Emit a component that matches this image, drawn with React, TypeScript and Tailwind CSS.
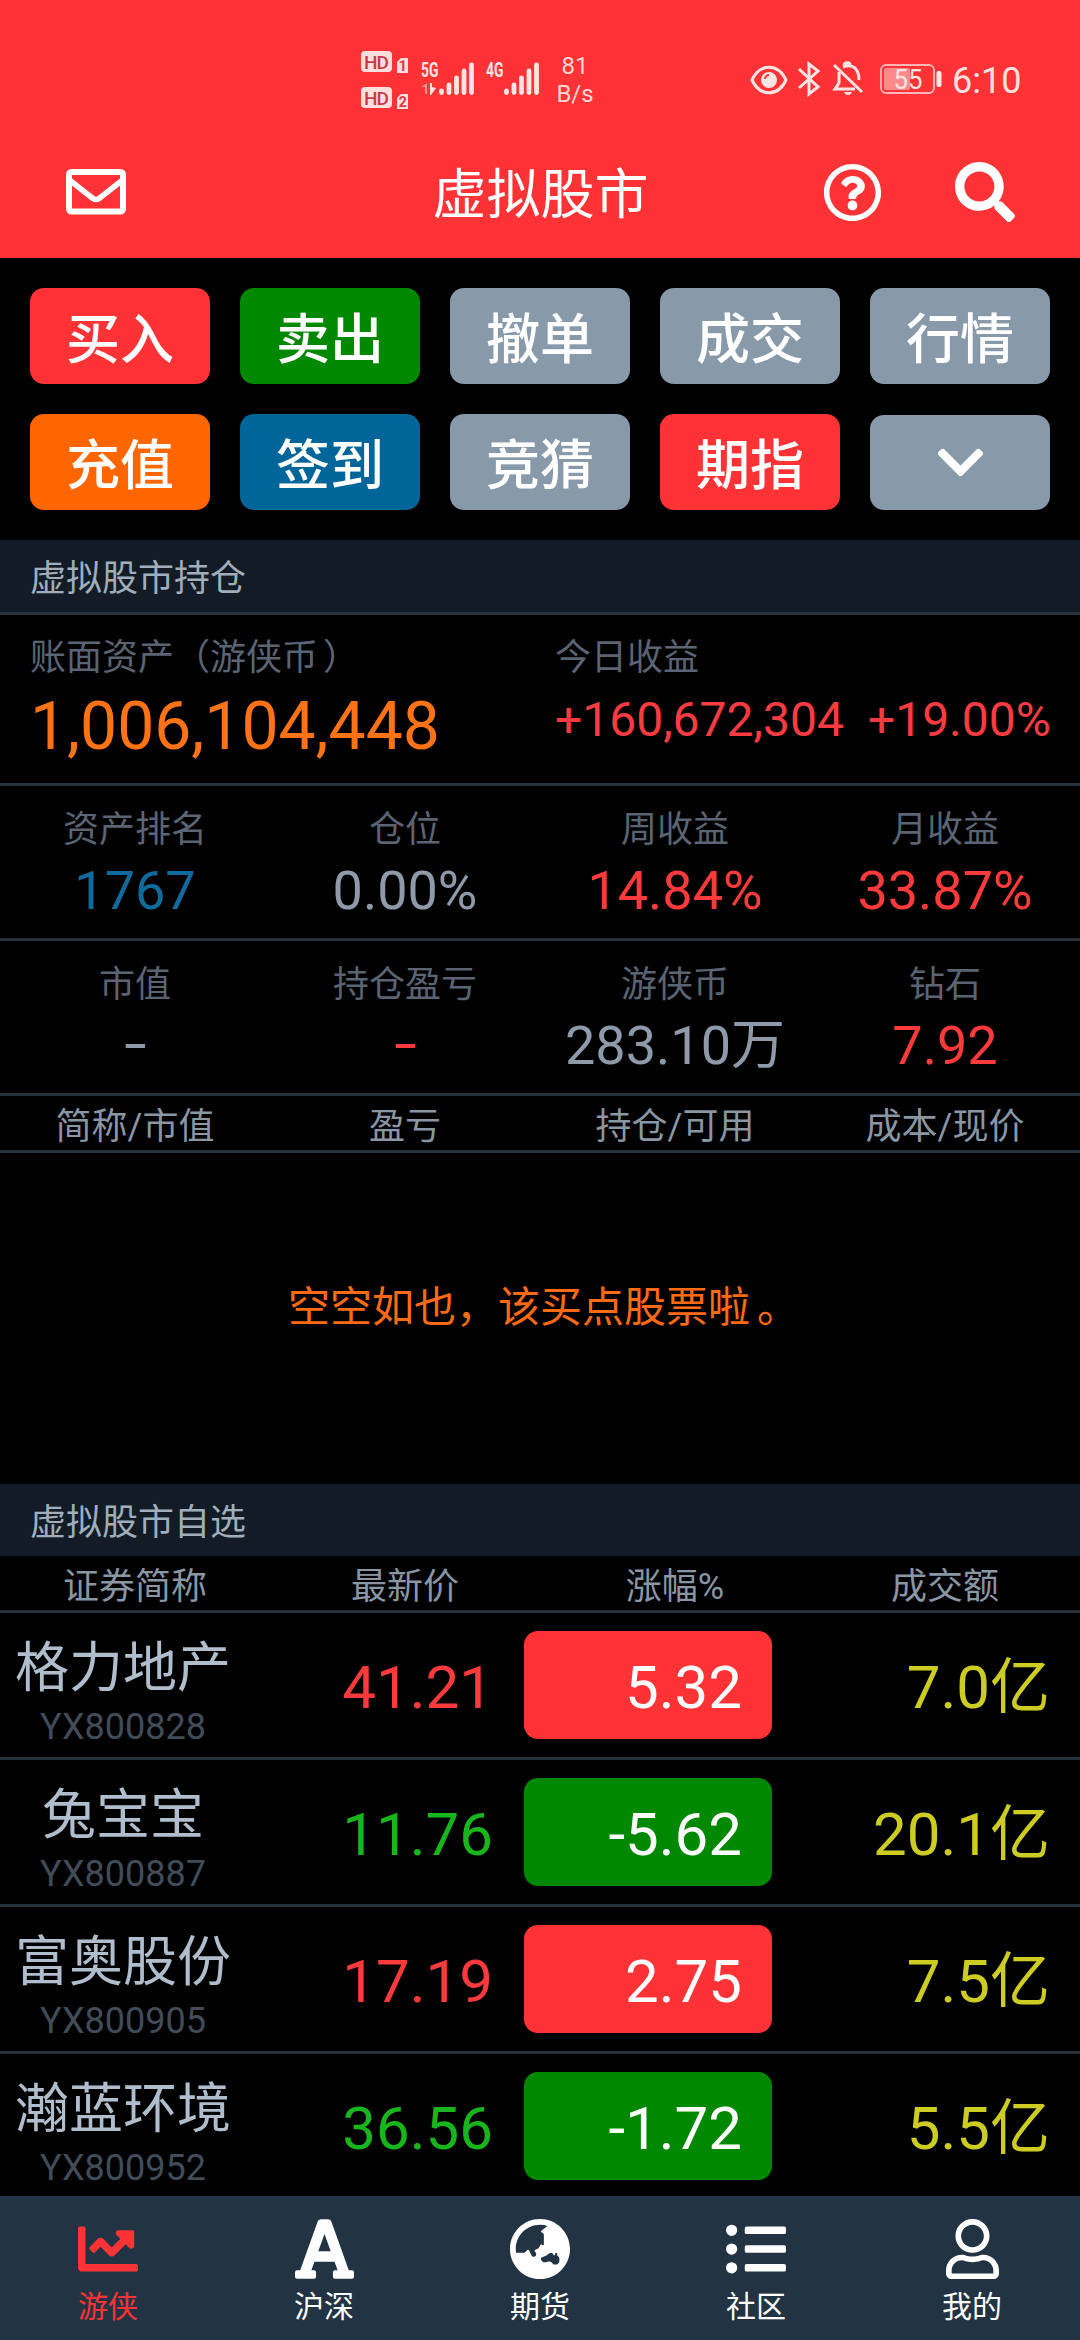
import React from 'react';
import {
  FaChartLine,
  FaChevronDown,
  FaFont,
  FaGlobeAsia,
  FaListUl,
  FaRegQuestionCircle,
  FaRegUser,
  FaSearch,
} from 'react-icons/fa';
import type { IconType } from 'react-icons';

interface Action {
  label: string;
  color: string;
}

interface Stat {
  label: string;
  value: string;
  color: string;
}

interface Stock {
  name: string;
  code: string;
  price: string;
  change: string;
  amount: string;
}

interface Tab {
  label: string;
  icon: IconType;
  size: string;
}

const actions: Action[] = [
  { label: '买入', color: 'bg-[#ff3336]' },
  { label: '卖出', color: 'bg-[#008800]' },
  { label: '撤单', color: 'bg-[#8899aa]' },
  { label: '成交', color: 'bg-[#8899aa]' },
  { label: '行情', color: 'bg-[#8899aa]' },
  { label: '充值', color: 'bg-[#ff6600]' },
  { label: '签到', color: 'bg-[#006699]' },
  { label: '竞猜', color: 'bg-[#8899aa]' },
  { label: '期指', color: 'bg-[#ff3336]' },
];

const incomeStats: Stat[] = [
  { label: '资产排名', value: '1767', color: 'text-[#106a9c]' },
  { label: '仓位', value: '0.00%', color: 'text-[#8e9aaa]' },
  { label: '周收益', value: '14.84%', color: 'text-[#ff3a3c]' },
  { label: '月收益', value: '33.87%', color: 'text-[#ff3a3c]' },
];

const balanceStats: Stat[] = [
  { label: '市值', value: '-', color: 'text-[#8e9aaa]' },
  { label: '持仓盈亏', value: '-', color: 'text-[#ff3a3c]' },
  { label: '游侠币', value: '283.10万', color: 'text-[#8e9aaa]' },
  { label: '钻石', value: '7.92', color: 'text-[#ff3a3c]' },
];

const stocks: Stock[] = [
  { name: '格力地产', code: 'YX800828', price: '41.21', change: '5.32', amount: '7.0亿' },
  { name: '兔宝宝', code: 'YX800887', price: '11.76', change: '-5.62', amount: '20.1亿' },
  { name: '富奥股份', code: 'YX800905', price: '17.19', change: '2.75', amount: '7.5亿' },
  { name: '瀚蓝环境', code: 'YX800952', price: '36.56', change: '-1.72', amount: '5.5亿' },
];

const tabs: Tab[] = [
  { label: '游侠', icon: FaChartLine, size: 'size-[60px]' },
  { label: '沪深', icon: FaFont, size: 'h-[68px] w-[59px]' },
  { label: '期货', icon: FaGlobeAsia, size: 'h-[62px] w-[60px]' },
  { label: '社区', icon: FaListUl, size: 'size-[60px]' },
  { label: '我的', icon: FaRegUser, size: 'h-[60px] w-[53px]' },
];

const HdBadge: React.FC<{ sim: string }> = ({ sim }) => (
  <svg width="48" height="24" viewBox="0 0 48 24">
    <rect x="0" y="1" width="31" height="21" rx="4" fill="#ffdede" />
    <text x="15.5" y="18.5" textAnchor="middle" textLength="25" fontSize="19" fontWeight="500" fill="#c83a44">
      HD
    </text>
    <path d="M36 12l4-4h7v15H36z" fill="#ffdede" />
    <text x="41.8" y="21" textAnchor="middle" fontSize="14" fontWeight="700" fill="#d83a40">
      {sim}
    </text>
  </svg>
);

const Signal: React.FC<{ label: string; traffic?: boolean }> = ({ label, traffic }) => (
  <svg width="56" height="40" viewBox="0 -4 56 40">
    <text x="1" y="15.5" textLength="17.5" lengthAdjust="spacingAndGlyphs" fontSize="21" fontWeight="700" fill="#ffe4e4">
      {label}
    </text>
    {traffic && (
      <g>
        <path d="M1 26l6-4v11H5v-7z" fill="#ff8d8d" />
        <path d="M10 22h2v4l4 1-5 7h-1z" fill="#ffe4e4" />
      </g>
    )}
    <path
      d="M21.5 30v1.5M29 24v7.5M36.5 17v14.5M44 10v21.5M51.5 4v27.5"
      stroke="#ffe4e4"
      strokeWidth="4.8"
      strokeLinecap="round"
    />
  </svg>
);

const StatusBar: React.FC = () => (
  <div className="flex h-[140px] pt-[50px] pl-[361px] text-[#ffe0e0]">
    <div className="flex flex-col gap-3">
      <HdBadge sim="1" />
      <HdBadge sim="2" />
    </div>
    <div className="mt-[7px] ml-[11px] flex gap-[9px]">
      <Signal label="5G" traffic />
      <Signal label="4G" />
    </div>
    <div className="ml-[12px] w-[44px] text-center text-[24px] leading-[28px] text-[#ffd6d6]">
      <div className="mt-[2px]">81</div>
      <div>B/s</div>
    </div>
    <svg className="mt-[15px] ml-[153px]" width="38" height="30" viewBox="0 0 38 30" fill="none">
      <path d="M2 15C10-2 28-2 36 15 28 32 10 32 2 15z" stroke="#ffe4e4" strokeWidth="3" />
      <circle cx="19" cy="15" r="8" fill="#ffe4e4" />
      <path d="M15 14a4 4 0 0 1 4-4" stroke="#ff3336" strokeWidth="2" />
    </svg>
    <svg className="mt-[11px] ml-[9px]" width="24" height="36" viewBox="0 0 24 36" fill="none">
      <path d="M2 8l19 18-9 7V3l9 7L2 27" stroke="#ffe4e4" strokeWidth="3" />
    </svg>
    <svg className="mt-[11px] ml-[11px]" width="32" height="36" viewBox="0 0 32 36" fill="none">
      <path d="M7 11v11l-4 6h20M11 6c10-4 16 2 16 13M12 4c1-3 6-3 6 0" stroke="#ffe4e4" strokeWidth="3" />
      <path d="M2 4l28 27" stroke="#ffe4e4" strokeWidth="3" />
      <path d="M12 31h8c-1 4-7 4-8 0z" fill="#ffe4e4" />
    </svg>
    <svg className="mt-[13px] ml-[16px]" width="63" height="32" viewBox="0 0 63 32">
      <rect x="1" y="2" width="53" height="28" rx="5" fill="none" stroke="#ffb6b6" strokeWidth="1.8" />
      <rect x="4" y="5" width="26" height="22" rx="2" fill="#ff8a8c" />
      <text
        x="28"
        y="25.5"
        textAnchor="middle"
        textLength="29"
        lengthAdjust="spacingAndGlyphs"
        fontSize="27"
        fill="#ffe4e4"
      >
        55
      </text>
      <rect x="56.5" y="8" width="5" height="16" rx="2" fill="#ffe4e4" />
    </svg>
    <div className="mt-[8px] ml-[9px] text-[36px] leading-[46px]">6:10</div>
  </div>
);

const MailIcon: React.FC = () => (
  <svg width="60" height="46" viewBox="0 0 60 46" fill="none" stroke="currentColor" strokeLinejoin="round">
    <rect x="3" y="3" width="54" height="39.5" rx="2.5" strokeWidth="6" />
    <path d="M4 11.5L27 29.5Q30 31.5 33 29.5L56 11.5" strokeWidth="5.5" />
  </svg>
);

const Header: React.FC = () => (
  <header className="h-[258px] bg-[#ff3336] text-white">
    <StatusBar />
    <div className="grid h-[104px] grid-cols-[1fr_auto_1fr] items-center pr-[65px] pl-[66px]">
      <MailIcon />
      <h1 className="pt-[8px] text-[54px] leading-[76px]">虚拟股市</h1>
      <div className="flex items-center justify-end gap-[73px]">
        <FaRegQuestionCircle className="size-[59px]" />
        <FaSearch className="size-[60px]" />
      </div>
    </div>
  </header>
);

const SectionTitle: React.FC<{ title: string }> = ({ title }) => (
  <h2 className="flex h-[72px] items-center bg-[#131b26] pt-[6px] pl-[30px] text-[36px] text-[#a0adba]">{title}</h2>
);

const StatRow: React.FC<{ stats: Stat[] }> = ({ stats }) => (
  <div className="grid h-[155px] grid-cols-4 border-b-[3px] border-[#28323c] pt-[20px] text-center">
    {stats.map((stat) => (
      <div key={stat.label}>
        <div className="text-[36px] leading-[48px] text-[#5a6472]">{stat.label}</div>
        <div className={`mt-[3px] text-[54px] leading-[68px] ${stat.color}`}>
          {stat.value === '-' ? <span className="inline-block -translate-y-[2px] scale-x-150">-</span> : stat.value}
        </div>
      </div>
    ))}
  </div>
);

const ColumnTitles: React.FC<{ titles: string[] }> = ({ titles }) => (
  <div className="grid h-[57px] grid-cols-4 border-b-[3px] border-[#28323c] pt-[5px] text-center text-[36px] leading-[52px] text-[#8996a3]">
    {titles.map((title) => (
      <div key={title}>{title}</div>
    ))}
  </div>
);

const StockRow: React.FC<{ stock: Stock }> = ({ stock }) => {
  const falling = stock.change.startsWith('-');

  return (
    <div className="flex h-[147px] shrink-0 items-center border-b-[3px] border-[#28323c]">
      <div className="w-[246px] pt-[19px] text-center">
        <div className="text-[54px] leading-[64px] text-[#b0bdcc]">{stock.name}</div>
        <div className="text-[36px] leading-[52px] text-[#424c59]">{stock.code}</div>
      </div>
      <div className={`w-[247px] pt-[5px] text-right text-[60px] ${falling ? 'text-[#18b51c]' : 'text-[#ff3a3c]'}`}>
        {stock.price}
      </div>
      <div
        className={`ml-[31px] flex h-[108px] w-[248px] items-center justify-end rounded-[14px] pt-[5px] pr-[30px] text-[60px] text-white ${
          falling ? 'bg-[#008800]' : 'bg-[#ff3336]'
        }`}
      >
        {stock.change}
      </div>
      <div className="flex-1 pt-[6px] pr-[30px] text-right text-[60px] text-[#cccc22]">{stock.amount}</div>
    </div>
  );
};

const App: React.FC = () => {
  return (
    <div className="flex h-[2340px] w-[1080px] flex-col overflow-hidden bg-black font-[Roboto,'Noto_Sans_CJK_SC',sans-serif]">
      <Header />

      <div className="grid h-[282px] grid-cols-5 content-start gap-[30px] px-[30px] pt-[30px]">
        {actions.map((action) => (
          <button
            key={action.label}
            className={`h-[96px] rounded-[14px] pt-[9px] text-[54px] font-medium text-white ${action.color}`}
          >
            {action.label}
          </button>
        ))}
        <button className="mt-px flex h-[95px] items-center justify-center rounded-[14px] bg-[#8899aa] text-white">
          <FaChevronDown className="size-[53px]" />
        </button>
      </div>

      <SectionTitle title="虚拟股市持仓" />
      <div className="flex h-[174px] border-y-[3px] border-[#28323c] pt-[18px] pl-[30px]">
        <div className="w-[525px]">
          <div className="text-[36px] leading-[50px] text-[#5a6472]">
            账面资产（游侠币<span className="ml-[5px]">）</span>
          </div>
          <div className="text-[66px] leading-[88px] text-[#ff7316]">1,006,104,448</div>
        </div>
        <div>
          <div className="text-[36px] leading-[50px] text-[#5a6472]">今日收益</div>
          <div className="mt-[7px] flex gap-[24px] text-[48px] leading-[60px] text-[#fa3c42]">
            <span>+160,672,304</span>
            <span>+19.00%</span>
          </div>
        </div>
      </div>
      <StatRow stats={incomeStats} />
      <StatRow stats={balanceStats} />
      <ColumnTitles titles={['简称/市值', '盈亏', '持仓/可用', '成本/现价']} />
      <div className="flex h-[331px] items-center justify-center pb-[23px] text-[42px] text-[#ff6a14]">
        空空如也，该买点股票啦<span className="translate-x-[7px]">。</span>
      </div>

      <SectionTitle title="虚拟股市自选" />
      <ColumnTitles titles={['证券简称', '最新价', '涨幅%', '成交额']} />
      <div className="flex min-h-0 flex-1 flex-col overflow-hidden">
        {stocks.map((stock) => (
          <StockRow key={stock.code} stock={stock} />
        ))}
      </div>

      <nav className="grid h-[144px] shrink-0 grid-cols-5 bg-[#223344]">
        {tabs.map((tab, index) => (
          <div
            key={tab.label}
            className={`flex flex-col items-center pt-[22px] ${index === 0 ? 'text-[#ff3336]' : 'text-white'}`}
          >
            <div className="flex h-[62px] items-center">
              <tab.icon className={tab.size} preserveAspectRatio="none" />
            </div>
            <span className="mt-[7px] text-[30px] leading-[40px]">{tab.label}</span>
          </div>
        ))}
      </nav>
    </div>
  );
};

export default App;
